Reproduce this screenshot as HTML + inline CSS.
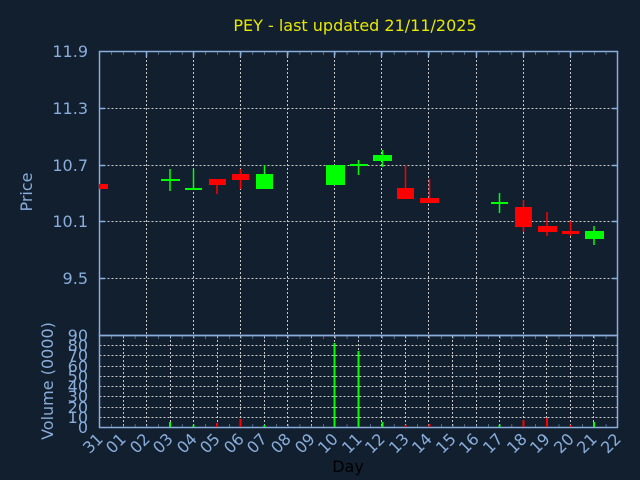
<!DOCTYPE html>
<html><head><meta charset="utf-8"><style>
html,body{margin:0;padding:0;background:#111f2f;width:640px;height:480px;overflow:hidden}
svg{display:block}
text{font-family:"DejaVu Sans","Liberation Sans",sans-serif}
</style></head><body>
<svg width="640" height="480" xmlns="http://www.w3.org/2000/svg">
<defs>
<pattern id="tk" x="99.5" y="0" width="11.775" height="480" patternUnits="userSpaceOnUse">
<rect x="-0.5" y="0" width="1" height="480" fill="#8aaedb"/>
</pattern>
</defs>
<rect width="640" height="480" fill="#111f2f"/>
<text x="355" y="31" fill="#e8e800" font-size="16" text-anchor="middle">PEY - last updated 21/11/2025</text>
<!-- price grid -->
<g stroke="#c8c8c8" stroke-width="1" stroke-dasharray="2,2">
<line x1="99.5" y1="108.5" x2="617" y2="108.5"/>
<line x1="99.5" y1="165.5" x2="617" y2="165.5"/>
<line x1="99.5" y1="221.5" x2="617" y2="221.5"/>
<line x1="99.5" y1="278.5" x2="617" y2="278.5"/>
<line x1="146.5" y1="52" x2="146.5" y2="335"/><line x1="193.5" y1="52" x2="193.5" y2="335"/>
<line x1="240.5" y1="52" x2="240.5" y2="335"/><line x1="287.5" y1="52" x2="287.5" y2="335"/>
<line x1="334.5" y1="52" x2="334.5" y2="335"/><line x1="381.5" y1="52" x2="381.5" y2="335"/>
<line x1="428.5" y1="52" x2="428.5" y2="335"/><line x1="476.5" y1="52" x2="476.5" y2="335"/>
<line x1="523.5" y1="52" x2="523.5" y2="335"/><line x1="570.5" y1="52" x2="570.5" y2="335"/>
</g>
<!-- volume grid -->
<g stroke="#c8c8c8" stroke-width="1" stroke-dasharray="2,2">
<line x1="99.5" y1="345.5" x2="617" y2="345.5"/><line x1="99.5" y1="355.5" x2="617" y2="355.5"/>
<line x1="99.5" y1="366.5" x2="617" y2="366.5"/><line x1="99.5" y1="376.5" x2="617" y2="376.5"/>
<line x1="99.5" y1="386.5" x2="617" y2="386.5"/><line x1="99.5" y1="396.5" x2="617" y2="396.5"/>
<line x1="99.5" y1="407.5" x2="617" y2="407.5"/><line x1="99.5" y1="417.5" x2="617" y2="417.5"/>
<line x1="123.5" y1="336" x2="123.5" y2="427"/><line x1="146.5" y1="336" x2="146.5" y2="427"/>
<line x1="170.5" y1="336" x2="170.5" y2="427"/><line x1="193.5" y1="336" x2="193.5" y2="427"/>
<line x1="217.5" y1="336" x2="217.5" y2="427"/><line x1="240.5" y1="336" x2="240.5" y2="427"/>
<line x1="264.5" y1="336" x2="264.5" y2="427"/><line x1="287.5" y1="336" x2="287.5" y2="427"/>
<line x1="311.5" y1="336" x2="311.5" y2="427"/><line x1="334.5" y1="336" x2="334.5" y2="427"/>
<line x1="358.5" y1="336" x2="358.5" y2="427"/><line x1="381.5" y1="336" x2="381.5" y2="427"/>
<line x1="405.5" y1="336" x2="405.5" y2="427"/><line x1="428.5" y1="336" x2="428.5" y2="427"/>
<line x1="452.5" y1="336" x2="452.5" y2="427"/><line x1="476.5" y1="336" x2="476.5" y2="427"/>
<line x1="499.5" y1="336" x2="499.5" y2="427"/><line x1="523.5" y1="336" x2="523.5" y2="427"/>
<line x1="546.5" y1="336" x2="546.5" y2="427"/><line x1="570.5" y1="336" x2="570.5" y2="427"/>
<line x1="593.5" y1="336" x2="593.5" y2="427"/>
</g>
<!-- minor ticks -->
<rect x="100" y="52" width="517" height="3" fill="url(#tk)"/>
<rect x="100" y="336" width="517" height="3" fill="url(#tk)"/>
<rect x="100" y="424" width="517" height="3" fill="url(#tk)"/>
<!-- axes -->
<g stroke="#8aaedb" stroke-width="1.5" fill="none">
<rect x="99.5" y="51.5" width="518" height="284"/>
<rect x="99.5" y="335.5" width="518" height="92"/>
<path d="M100 108.5h5M100 165.5h5M100 221.5h5M100 278.5h5M612 108.5h5M612 165.5h5M612 221.5h5M612 278.5h5"/>
<path d="M146.5 52v5M193.5 52v5M240.5 52v5M287.5 52v5M334.5 52v5M381.5 52v5M428.5 52v5M476.5 52v5M523.5 52v5M570.5 52v5"/>
</g>
<!-- candles -->
<g stroke-width="1.5">
<rect x="99" y="184" width="9" height="5" fill="#f00"/>
<line x1="170" y1="169" x2="170" y2="191" stroke="#0f0"/><rect x="161" y="179" width="19" height="2" fill="#0f0"/>
<line x1="193.5" y1="169" x2="193.5" y2="189" stroke="#0f0"/><rect x="185" y="188" width="17" height="2" fill="#0f0"/>
<line x1="217" y1="179" x2="217" y2="194" stroke="#f00"/><rect x="209" y="179" width="17" height="6" fill="#f00"/>
<line x1="240.5" y1="169" x2="240.5" y2="189" stroke="#f00"/><rect x="232" y="174" width="17" height="6" fill="#f00"/>
<line x1="264.5" y1="165" x2="264.5" y2="175" stroke="#0f0"/><rect x="256" y="174" width="17" height="15" fill="#0f0"/>
<rect x="326" y="165" width="19" height="20" fill="#0f0"/>
<line x1="358.5" y1="160" x2="358.5" y2="175" stroke="#0f0"/><rect x="350" y="164" width="18" height="2" fill="#0f0"/>
<line x1="382.5" y1="150" x2="382.5" y2="167" stroke="#0f0"/><rect x="373" y="155" width="19" height="6" fill="#0f0"/>
<line x1="405.5" y1="165" x2="405.5" y2="190" stroke="#f00"/><rect x="397" y="188" width="17" height="11" fill="#f00"/>
<line x1="429.5" y1="179" x2="429.5" y2="199" stroke="#f00"/><rect x="420" y="198" width="19" height="5" fill="#f00"/>
<line x1="499.5" y1="193" x2="499.5" y2="213" stroke="#0f0"/><rect x="491" y="202" width="17" height="2" fill="#0f0"/>
<line x1="523.5" y1="200" x2="523.5" y2="232" stroke="#f00"/><rect x="515" y="207" width="17" height="20" fill="#f00"/>
<line x1="547" y1="212" x2="547" y2="236" stroke="#f00"/><rect x="538" y="226" width="19" height="6" fill="#f00"/>
<line x1="570.5" y1="221" x2="570.5" y2="236" stroke="#f00"/><rect x="562" y="231" width="17" height="3" fill="#f00"/>
<line x1="594" y1="226" x2="594" y2="245" stroke="#0f0"/><rect x="585" y="231" width="19" height="8" fill="#0f0"/>
</g>
<!-- volume bars -->
<g stroke-width="2">
<line x1="170" y1="422" x2="170" y2="427" stroke="#0f0"/>
<line x1="193.5" y1="425" x2="193.5" y2="427" stroke="#0f0"/>
<line x1="217" y1="423" x2="217" y2="427" stroke="#f00"/>
<line x1="240.5" y1="419" x2="240.5" y2="427" stroke="#f00"/>
<line x1="264.5" y1="425" x2="264.5" y2="427" stroke="#0f0"/>
<line x1="334.5" y1="343" x2="334.5" y2="427" stroke="#0f0"/>
<line x1="358.5" y1="351" x2="358.5" y2="427" stroke="#0f0"/>
<line x1="382.5" y1="422" x2="382.5" y2="427" stroke="#0f0"/>
<line x1="405.5" y1="425" x2="405.5" y2="427" stroke="#f00"/>
<line x1="429.5" y1="424" x2="429.5" y2="427" stroke="#f00"/>
<line x1="499.5" y1="425" x2="499.5" y2="427" stroke="#0f0"/>
<line x1="523.5" y1="420" x2="523.5" y2="427" stroke="#f00"/>
<line x1="547" y1="418" x2="547" y2="427" stroke="#f00"/>
<line x1="570.5" y1="425" x2="570.5" y2="427" stroke="#f00"/>
<line x1="594" y1="422" x2="594" y2="427" stroke="#0f0"/>
</g>
<!-- y labels -->
<g fill="#8aaedb" font-size="16" text-anchor="end">
<text x="88" y="57">11.9</text><text x="88" y="114">11.3</text>
<text x="88" y="171">10.7</text><text x="88" y="227">10.1</text>
<text x="88" y="284">9.5</text>
<text x="88" y="341">90</text><text x="88" y="351">80</text><text x="88" y="361">70</text>
<text x="88" y="372">60</text><text x="88" y="382">50</text><text x="88" y="392">40</text>
<text x="88" y="402">30</text><text x="88" y="413">20</text><text x="88" y="423">10</text>
<text x="88" y="433">0</text>
</g>
<text transform="translate(32,192) rotate(-90)" fill="#8aaedb" font-size="16" text-anchor="middle">Price</text>
<text transform="translate(53,381) rotate(-90)" fill="#8aaedb" font-size="16" text-anchor="middle">Volume (0000)</text>
<text x="348" y="472" fill="#000" font-size="16" text-anchor="middle">Day</text>
<!-- x labels -->
<g fill="#8aaedb" font-size="16" text-anchor="end">
<text transform="translate(104,440) rotate(-45)">31</text>
<text transform="translate(127,440) rotate(-45)">01</text>
<text transform="translate(151,440) rotate(-45)">02</text>
<text transform="translate(174,440) rotate(-45)">03</text>
<text transform="translate(198,440) rotate(-45)">04</text>
<text transform="translate(221,440) rotate(-45)">05</text>
<text transform="translate(245,440) rotate(-45)">06</text>
<text transform="translate(268,440) rotate(-45)">07</text>
<text transform="translate(292,440) rotate(-45)">08</text>
<text transform="translate(316,440) rotate(-45)">09</text>
<text transform="translate(339,440) rotate(-45)">10</text>
<text transform="translate(363,440) rotate(-45)">11</text>
<text transform="translate(386,440) rotate(-45)">12</text>
<text transform="translate(410,440) rotate(-45)">13</text>
<text transform="translate(433,440) rotate(-45)">14</text>
<text transform="translate(457,440) rotate(-45)">15</text>
<text transform="translate(480,440) rotate(-45)">16</text>
<text transform="translate(504,440) rotate(-45)">17</text>
<text transform="translate(528,440) rotate(-45)">18</text>
<text transform="translate(551,440) rotate(-45)">19</text>
<text transform="translate(575,440) rotate(-45)">20</text>
<text transform="translate(598,440) rotate(-45)">21</text>
<text transform="translate(622,440) rotate(-45)">22</text>
</g>
</svg>
</body></html>
